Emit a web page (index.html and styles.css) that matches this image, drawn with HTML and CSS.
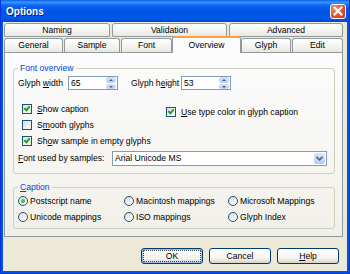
FILE: index.html
```html
<!DOCTYPE html>
<html lang="en">

<head>
    <meta charset="UTF-8">
    <title>Options</title>
    <link rel="stylesheet" href="styles.css">
</head>

<body>
    <div class="window">
        <div class="titlebar">
            <span class="title">Options</span>
            <span class="close-btn">
                <svg width="10" height="10" viewBox="0 0 10 10">
                    <path d="M1.5 1.5 L8.5 8.5 M8.5 1.5 L1.5 8.5" stroke="#fff" stroke-width="2" stroke-linecap="square" />
                </svg>
            </span>
        </div>

        <div class="client">
            <div class="tab-row back-row">
                <div class="tab t-naming">Naming</div>
                <div class="tab t-validation">Validation</div>
                <div class="tab t-advanced">Advanced</div>
            </div>
            <div class="tab-row front-row">
                <div class="tab t-general">General</div>
                <div class="tab t-sample">Sample</div>
                <div class="tab t-font">Font</div>
                <div class="tab t-overview active">Overview</div>
                <div class="tab t-glyph">Glyph</div>
                <div class="tab t-edit">Edit</div>
            </div>

            <div class="panel">
                <fieldset class="group overview-group">
                    <legend>Font overview</legend>

                    <div class="size-row">
                        <span class="size-label">Glyph <u>w</u>idth</span>
                        <span class="spin-input">
                            <span class="value">65</span>
                            <span class="spin"><span class="up"></span><span class="down"></span></span>
                        </span>
                        <span class="size-label second">Glyph h<u>e</u>ight</span>
                        <span class="spin-input">
                            <span class="value">53</span>
                            <span class="spin"><span class="up"></span><span class="down"></span></span>
                        </span>
                    </div>

                    <div class="checks">
                        <div class="check-col">
                            <div class="check-row">
                                <span class="checkbox checked"></span>
                                <span><u>S</u>how caption</span>
                            </div>
                            <div class="check-row">
                                <span class="checkbox"></span>
                                <span>S<u>m</u>ooth glyphs</span>
                            </div>
                            <div class="check-row">
                                <span class="checkbox checked"></span>
                                <span>Sh<u>o</u>w sample in empty glyphs</span>
                            </div>
                        </div>
                        <div class="check-col right-col">
                            <div class="check-row">
                                <span class="checkbox checked"></span>
                                <span><u>U</u>se type color in glyph caption</span>
                            </div>
                        </div>
                    </div>

                    <div class="font-row">
                        <span class="font-label"><u>F</u>ont used by samples:</span>
                        <span class="combo">
                            <span class="value">Arial Unicode MS</span>
                            <span class="drop-btn">
                                <svg width="7" height="5" viewBox="0 0 7 5">
                                    <path d="M0.5 0.8 L3.5 3.8 L6.5 0.8" fill="none" stroke="#4d6185" stroke-width="1.6" />
                                </svg>
                            </span>
                        </span>
                    </div>
                </fieldset>

                <fieldset class="group caption-group">
                    <legend><u>C</u>aption</legend>
                    <div class="radio-grid">
                        <div class="radio-row"><span class="radio checked"></span><span>Postscript name</span></div>
                        <div class="radio-row"><span class="radio"></span><span>Macintosh mappings</span></div>
                        <div class="radio-row"><span class="radio"></span><span>Microsoft Mappings</span></div>
                        <div class="radio-row"><span class="radio"></span><span>Unicode mappings</span></div>
                        <div class="radio-row"><span class="radio"></span><span>ISO mappings</span></div>
                        <div class="radio-row"><span class="radio"></span><span>Glyph Index</span></div>
                    </div>
                </fieldset>
            </div>

            <div class="buttons">
                <button class="btn default">OK</button>
                <button class="btn">Cancel</button>
                <button class="btn"><u>H</u>elp</button>
            </div>
        </div>
    </div>
</body>

</html>
```

FILE: styles.css
```css
body {
    margin: 0;
    padding: 0;
    font-family: "Liberation Sans", Arial, sans-serif;
    font-size: 8.6px;
    color: #000;
}

u {
    text-decoration: underline;
    text-underline-offset: 1px;
}

.window {
    width: 350px;
    height: 274px;
    box-sizing: border-box;
    display: flex;
    flex-direction: column;
    background-color: #0055e5;
    border-left: 1px solid #0831d9;
    border-right: 1px solid #0831d9;
    border-bottom: 1px solid #0831d9;
}

/* title bar */

.titlebar {
    height: 22px;
    flex: none;
    display: flex;
    align-items: center;
    justify-content: space-between;
    padding: 0 3px 0 5px;
    background: linear-gradient(#0a5fea 0%, #3d95ff 10%, #0a66f4 25%, #0055e5 50%, #0058ec 85%, #0046d0 100%);
}

.title {
    color: #fff;
    font-weight: bold;
    font-size: 10px;
    text-shadow: 1px 1px #0f1c8c;
}

.close-btn {
    width: 14px;
    height: 13px;
    border: 1px solid #fff;
    border-radius: 3px;
    display: flex;
    align-items: center;
    justify-content: center;
    background: radial-gradient(circle at 30% 30%, #ee8f6f, #d8461f 70%, #c33b16);
}

/* dialog body */

.client {
    flex: 1;
    margin: 0 2px 2px 2px;
    padding-top: 1px;
    background-color: #ece9d8;
    display: flex;
    flex-direction: column;
}

.tab-row {
    display: flex;
    padding-left: 1px;
}

.back-row {
    gap: 2px;
    height: 15px;
}

.front-row {
    gap: 1px;
    height: 14px;
    align-items: flex-end;
}

.tab {
    box-sizing: border-box;
    height: 14px;
    border: 1px solid #919b9c;
    border-bottom: none;
    border-radius: 3px 3px 0 0;
    background: linear-gradient(#ffffff, #f3f3ef 60%, #e8e7e1);
    text-align: center;
    line-height: 13px;
    flex: none;
}

.back-row .tab {
    border-bottom: 1px solid #919b9c;
}

.t-naming { width: 106px; }
.t-validation { width: 115px; }
.t-advanced { width: 114px; }
.t-general { width: 59px; }
.t-sample { width: 56px; }
.t-font { width: 51px; }
.t-overview { width: 67px; }
.t-glyph { width: 50px; }
.t-edit { width: 51px; }

.tab.active {
    position: relative;
    z-index: 1;
    height: 17px;
    margin-bottom: -1px;
    margin-left: -1px;
    width: 69px;
    margin-right: -1px;
    background: #fcfcfe;
    border-top: 2px solid #f3a43a;
    line-height: 15px;
}

.panel {
    box-sizing: border-box;
    height: 185px;
    margin: 0 4px 0 1px;
    padding: 10px 7px 0 8px;
    border: 1px solid #919b9c;
    background: linear-gradient(#fcfcfe, #f6f5f1 60%, #f1efe8);
}

/* group boxes */

.group {
    margin: 0;
    border: 1px solid #d0d0bf;
    border-radius: 3px;
    padding: 0 4px 0 4px;
}

.group legend {
    padding: 0 2px;
    color: #0046d5;
    line-height: 11px;
}

.overview-group {
    padding-bottom: 7px;
}

.size-row {
    display: flex;
    align-items: center;
    height: 14px;
    margin-top: 2px;
}

.size-label {
    width: 50px;
}

.size-label.second {
    margin-left: 13px;
}

.spin-input,
.combo {
    box-sizing: border-box;
    height: 14px;
    border: 1px solid #7f9db9;
    background-color: #fff;
    display: flex;
    align-items: center;
    justify-content: space-between;
    padding-left: 2px;
}

.spin-input {
    width: 50px;
}

.spin {
    width: 10px;
    height: 12px;
    display: flex;
    flex-direction: column;
    gap: 1px;
    margin-right: 1px;
}

.spin span {
    flex: 1;
    border-radius: 2px;
    background: linear-gradient(#dce6fb, #b9cbf3);
    border: 1px solid #c8d6f7;
    box-sizing: border-box;
    position: relative;
}

.spin .up::after,
.spin .down::after {
    content: "";
    position: absolute;
    left: 2px;
    border-left: 2px solid transparent;
    border-right: 2px solid transparent;
}

.spin .up::after {
    top: 1px;
    border-bottom: 2px solid #4d6185;
}

.spin .down::after {
    top: 1px;
    border-top: 2px solid #4d6185;
}

.checks {
    display: flex;
    margin-top: 11px;
    padding-left: 4px;
}

.check-col {
    width: 144px;
}

.right-col {
    margin-top: 3px;
}

.check-row {
    height: 16px;
    display: flex;
    align-items: center;
    gap: 5px;
}

.checkbox {
    box-sizing: border-box;
    width: 10px;
    height: 10px;
    border: 1px solid #1c5180;
    background: linear-gradient(135deg, #dcdcd7, #fbfbf9);
    position: relative;
    flex: none;
}

.checkbox.checked::after {
    content: "";
    position: absolute;
    left: 2px;
    top: 0px;
    width: 2px;
    height: 4px;
    border-right: 2px solid #21a121;
    border-bottom: 2px solid #21a121;
    transform: rotate(40deg);
}

.font-row {
    display: flex;
    align-items: center;
    height: 16px;
    margin-top: 1px;
}

.font-label {
    width: 94px;
}

.combo {
    width: 215px;
    height: 15px;
}

.drop-btn {
    width: 11px;
    height: 11px;
    margin-right: 1px;
    border-radius: 2px;
    background: linear-gradient(#dce6fb, #b9cbf3);
    display: flex;
    align-items: center;
    justify-content: center;
}

.caption-group {
    margin-top: 8px;
    padding-bottom: 3px;
}

.radio-grid {
    display: grid;
    grid-template-columns: 106px 104px 1fr;
}

.radio-row {
    height: 16px;
    display: flex;
    align-items: center;
    gap: 2px;
}

.radio {
    box-sizing: border-box;
    width: 10px;
    height: 10px;
    border: 1px solid #1c5180;
    border-radius: 50%;
    background: linear-gradient(135deg, #dcdcd7, #ffffff);
    display: flex;
    align-items: center;
    justify-content: center;
    flex: none;
}

.radio.checked::after {
    content: "";
    width: 4px;
    height: 4px;
    border-radius: 50%;
    background: radial-gradient(circle at 35% 35%, #5fd35f, #1f8f1f);
}

/* buttons */

.buttons {
    display: flex;
    justify-content: flex-end;
    gap: 6px;
    margin-top: 11px;
    padding-right: 8px;
}

.btn {
    width: 62px;
    height: 16px;
    padding: 0;
    font-family: inherit;
    font-size: 8.6px;
    color: #000;
    border: 1px solid #003c74;
    border-radius: 3px;
    background: linear-gradient(#ffffff, #f3f2ed 70%, #d6d0c5);
}

.btn.default {
    box-shadow: inset 0 0 0 1px #a0bce9;
    outline: 1px dotted #444;
    outline-offset: -3px;
}
```
